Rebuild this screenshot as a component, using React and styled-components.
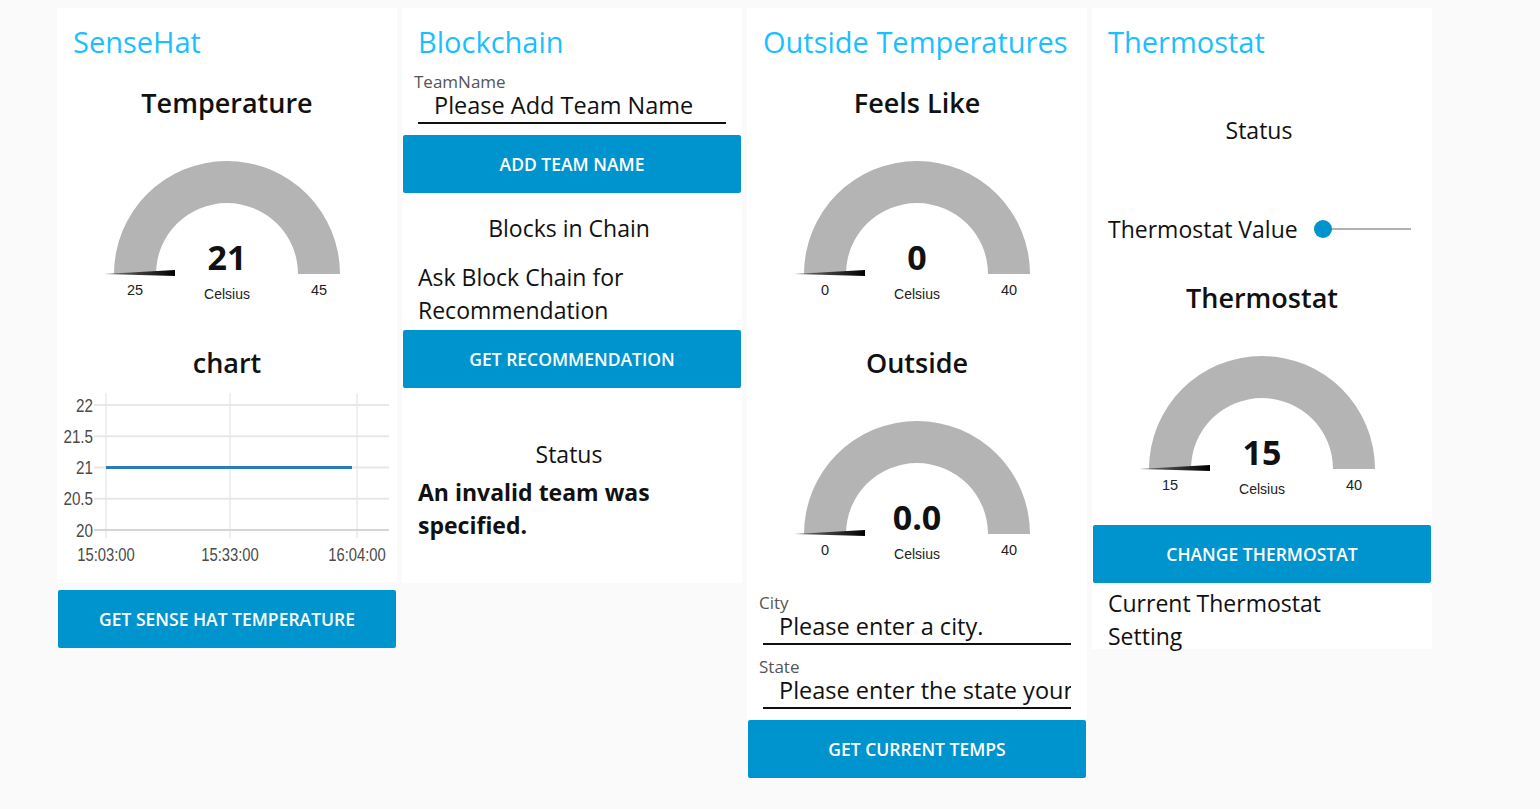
import React from "react";
import styled, { createGlobalStyle } from "styled-components";

const GlobalStyle = createGlobalStyle`
  html, body {
    margin: 0;
    padding: 0;
    background: #fafafa;
  }
  body {
    font-family: "Open Sans", sans-serif;
    color: #111;
  }
`;

const Page = styled.div`
  display: flex;
  align-items: flex-start;
  gap: 5px;
  padding: 8px 0 0 57px;
  min-height: 801px;
`;

const Column = styled.div`
  width: 340px;
  display: flex;
  flex-direction: column;
`;

const Card = styled.div`
  background: #fff;
  display: flex;
  flex-direction: column;
  min-height: ${(p) => (p.$h ? `${p.$h}px` : "auto")};
  padding-bottom: ${(p) => p.$pb || 0}px;
`;

const GroupTitle = styled.div`
  padding: 14px 16px 0;
  font-size: 29px;
  line-height: 40px;
  color: #1bbfff;
  white-space: nowrap;
`;

const Widget = styled.div`
  padding-top: 23px;
  margin-top: ${(p) => p.$mt || 0}px;
  display: flex;
  flex-direction: column;
  align-items: center;
`;

const WidgetTitle = styled.div`
  font-size: 27px;
  font-weight: 600;
  line-height: 36px;
  text-align: center;
`;

const Button = styled.button`
  display: flex;
  align-items: center;
  justify-content: center;
  height: 58px;
  margin: ${(p) => p.$mt || 0}px 1px 0;
  border: none;
  border-radius: 2px;
  background: #0094ce;
  color: #fff;
  font-family: "Open Sans", sans-serif;
  font-size: 17.5px;
  font-weight: 600;
  text-transform: uppercase;
  cursor: pointer;
`;

const Text = styled.div`
  font-size: 23px;
  line-height: 33px;
  padding: 0 ${(p) => (p.$center ? 22 : 16)}px 0 16px;
  margin-top: ${(p) => p.$mt || 0}px;
  margin-bottom: ${(p) => p.$mb || 0}px;
  text-align: ${(p) => (p.$center ? "center" : "left")};
  font-weight: ${(p) => (p.$bold ? 700 : 400)};
`;

const Field = styled.div`
  padding: 0 16px;
  margin-top: ${(p) => p.$mt || 0}px;
`;

const FieldLabel = styled.div`
  margin-left: -4px;
  font-size: 17px;
  line-height: 19px;
  color: #555;
`;

const FieldValue = styled.div`
  padding: 0 0 3px 16px;
  font-size: 23.5px;
  line-height: 28px;
  border-bottom: 2px solid #111;
  white-space: nowrap;
  overflow: hidden;
`;

const SliderRow = styled.div`
  display: flex;
  align-items: center;
  height: 33px;
  padding-left: 16px;
  margin-top: ${(p) => p.$mt || 0}px;
`;

const SliderLabel = styled.span`
  flex: 1;
  font-size: 23px;
  white-space: nowrap;
`;

const Track = styled.div`
  position: relative;
  width: 97px;
  height: 2px;
  margin-right: 21px;
  background: #b0b0b0;
`;

const Thumb = styled.div`
  position: absolute;
  left: 0;
  top: 50%;
  width: 18px;
  height: 18px;
  border-radius: 50%;
  background: #0094ce;
  transform: translateY(-50%);
`;

const Gauge = ({ title, value, min, max, units, mt }) => {
  const cx = 170;
  const cy = 153;
  const ro = 113;
  const ri = 71;
  const arc = `M ${cx - ro} ${cy} A ${ro} ${ro} 0 0 1 ${cx + ro} ${cy} L ${cx + ri} ${cy} A ${ri} ${ri} 0 0 0 ${cx - ri} ${cy} Z`;
  return (
    <Widget $mt={mt}>
      <WidgetTitle>{title}</WidgetTitle>
      <svg width="340" height="201" viewBox="0 0 340 201">
        <defs>
          <linearGradient id="needleShade" x1="0" x2="1" y1="0" y2="0">
            <stop offset="0" stopColor="#777" />
            <stop offset="1" stopColor="#000" />
          </linearGradient>
        </defs>
        <path d={arc} fill="#b4b4b4" />
        <polygon
          points={`${cx - 123},${cy} ${cx - 52},${cy - 4} ${cx - 52},${cy + 2}`}
          fill="url(#needleShade)"
        />
        <text
          x={cx}
          y={149}
          textAnchor="middle"
          fontFamily="'Open Sans', sans-serif"
          fontWeight="700"
          fontSize="34"
          fill="#111"
        >
          {value}
        </text>
        <g fontFamily="'Liberation Sans', Arial, sans-serif" fontSize="14.5" fill="#222" textAnchor="middle">
          <text x={cx - 92} y={174}>{min}</text>
          <text x={cx + 92} y={174}>{max}</text>
          <text x={cx} y={178} fontSize="14">{units}</text>
        </g>
      </svg>
    </Widget>
  );
};

const yTicks = [
  { label: "22", y: 24 },
  { label: "21.5", y: 55.25 },
  { label: "21", y: 86.5 },
  { label: "20.5", y: 117.75 },
  { label: "20", y: 149 },
];

const xTicks = [
  { label: "15:03:00", x: 49 },
  { label: "15:33:00", x: 173 },
  { label: "16:04:00", x: 300 },
];

const Chart = ({ title }) => (
  <Widget>
    <WidgetTitle>{title}</WidgetTitle>
    <svg width="340" height="183" viewBox="0 0 340 183">
      {xTicks.map((t) => (
        <line key={t.label} x1={t.x} x2={t.x} y1={12} y2={157} stroke="#e0e0e0" strokeWidth="1" />
      ))}
      {yTicks.map((t, i) => (
        <line
          key={t.label}
          x1={37}
          x2={332}
          y1={t.y}
          y2={t.y}
          stroke={i === yTicks.length - 1 ? "#d6d6d6" : "#e8e8e8"}
          strokeWidth="2"
        />
      ))}
      <line x1={49} x2={295} y1={86.5} y2={86.5} stroke="#2b7bba" strokeWidth="3" />
      <g fontFamily="'Liberation Sans', Arial, sans-serif" fontSize="19" fill="#4a4a4a">
        {yTicks.map((t) => (
          <text key={t.label} textAnchor="end" transform={`translate(36 ${t.y + 6.5}) scale(0.8 1)`}>
            {t.label}
          </text>
        ))}
        {xTicks.map((t) => (
          <text key={t.label} textAnchor="middle" transform={`translate(${t.x} 180) scale(0.78 1)`}>
            {t.label}
          </text>
        ))}
      </g>
    </svg>
  </Widget>
);

const InputField = ({ label, value, mt }) => (
  <Field $mt={mt}>
    <FieldLabel>{label}</FieldLabel>
    <FieldValue>{value}</FieldValue>
  </Field>
);

const App = () => {
  return (
    <>
      <GlobalStyle />
      <Page>
        <Column>
          <Card $h={575}>
            <GroupTitle>SenseHat</GroupTitle>
            <Gauge title="Temperature" value="21" min="25" max="45" units="Celsius" />
            <Chart title="chart" />
          </Card>
          <Button $mt={7}>Get Sense Hat Temperature</Button>
        </Column>

        <Column>
          <Card $h={575}>
            <GroupTitle>Blockchain</GroupTitle>
            <InputField label="TeamName" value="Please Add Team Name" mt={10} />
            <Button $mt={11}>Add Team Name</Button>
            <Text $center $mt={18.5}>Blocks in Chain</Text>
            <Text $mt={16.5}>
              Ask Block Chain for
              <br />
              Recommendation
            </Text>
            <Button $mt={3}>Get Recommendation</Button>
            <Text $center $mt={49.5}>Status</Text>
            <Text $bold $mt={5}>An invalid team was specified.</Text>
          </Card>
        </Column>

        <Column>
          <Card $pb={1}>
            <GroupTitle>Outside Temperatures</GroupTitle>
            <Gauge title="Feels Like" value="0" min="0" max="40" units="Celsius" />
            <Gauge title="Outside" value="0.0" min="0" max="40" units="Celsius" />
            <InputField label="City" value="Please enter a city." mt={11} />
            <InputField label="State" value="Please enter the state your city is in." mt={12} />
            <Button $mt={11}>Get Current Temps</Button>
          </Card>
        </Column>

        <Column>
          <Card>
            <GroupTitle>Thermostat</GroupTitle>
            <Text $center $mt={51.5}>Status</Text>
            <SliderRow $mt={66}>
              <SliderLabel>Thermostat Value</SliderLabel>
              <Track>
                <Thumb />
              </Track>
            </SliderRow>
            <Gauge title="Thermostat" value="15" min="15" max="40" units="Celsius" mt={11} />
            <Button $mt={8.5}>Change Thermostat</Button>
            <Text $mt={4} $mb={-4}>
              Current Thermostat
              <br />
              Setting
            </Text>
          </Card>
        </Column>
      </Page>
    </>
  );
};

export default App;
